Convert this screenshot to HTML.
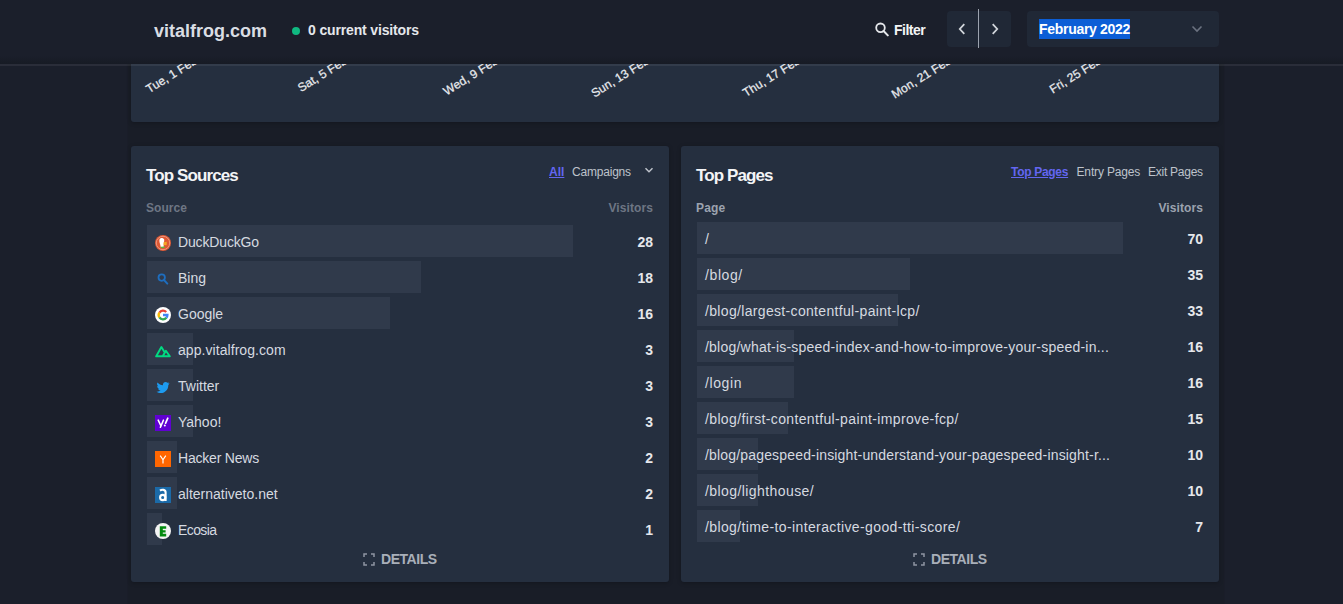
<!DOCTYPE html>
<html>
<head>
<meta charset="utf-8">
<style>
*{box-sizing:border-box;margin:0;padding:0}
html,body{width:1343px;height:604px;overflow:hidden;background:#1b1f2b;font-family:"Liberation Sans",sans-serif;color:#e5e7eb}
.abs{position:absolute}
.card{position:absolute;background:#252f3f;border-radius:3px;box-shadow:0 1px 4px rgba(0,0,0,.25)}
#cont{position:absolute;left:128px;top:64px;width:1096px;height:560px;background:#191d27;box-shadow:0 0 1px #191d27}
#header{position:absolute;left:0;top:0;width:1343px;height:64px;background:linear-gradient(to bottom,#1b1f2b 0,#1b1f2b 56px,#171b25 63px,#171b25 64px);z-index:10}
#hline{position:absolute;left:0;top:64px;width:1343px;height:2px;background:rgba(255,255,255,.065);z-index:11}
.t{position:absolute;white-space:nowrap;line-height:1}
.bar{position:absolute;left:16px;height:32px;background:#303a4b}
.row{position:absolute;left:0;width:100%;height:32px}
.lbl{position:absolute;left:47px;top:9px;font-size:14px;color:#d6dae0;white-space:nowrap;line-height:16px}
.plbl{position:absolute;left:24px;top:9px;font-size:14px;color:#d6dae0;white-space:nowrap;line-height:16px}
.num{position:absolute;right:16px;top:9px;font-size:14px;font-weight:bold;color:#e5e7eb;line-height:16px}
.ico{position:absolute;left:24px;top:10px;width:16px;height:16px}
.tk{position:absolute;width:0;height:0;transform:rotate(-32deg)}
.tk span{position:absolute;right:0;bottom:-1.84px;font-size:12px;line-height:12px;color:#e8eaee;white-space:nowrap;-webkit-text-stroke:0.25px #e8eaee}
</style>
</head>
<body>
<div id="cont"></div>
<!-- chart card (mostly hidden) -->
<div class="card" style="left:131px;top:-40px;width:1088px;height:162px"></div>
<div class="tk" style="left:197.6px;top:62.9px"><span>Tue, 1 Feb</span></div>
<div class="tk" style="left:348.4px;top:62.9px"><span>Sat, 5 Feb</span></div>
<div class="tk" style="left:499.2px;top:62.9px"><span>Wed, 9 Feb</span></div>
<div class="tk" style="left:650.0px;top:62.9px"><span>Sun, 13 Feb</span></div>
<div class="tk" style="left:800.8px;top:62.9px"><span>Thu, 17 Feb</span></div>
<div class="tk" style="left:951.6px;top:62.9px"><span>Mon, 21 Feb</span></div>
<div class="tk" style="left:1102.4px;top:62.9px"><span>Fri, 25 Feb</span></div>

<div id="hline"></div>
<div id="header">
  <div class="t" style="left:154px;top:21.5px;font-size:18px;font-weight:bold;color:#dadde3">vitalfrog.com</div>
  <div class="abs" style="left:292px;top:27px;width:8px;height:8px;border-radius:50%;background:#10b981"></div>
  <div class="t" style="left:308px;top:23px;font-size:14px;font-weight:bold;color:#e5e7eb;letter-spacing:-0.15px">0 current visitors</div>

  <svg class="abs" style="left:875px;top:22px" width="14" height="15" viewBox="0 0 14 15"><circle cx="5.5" cy="5.8" r="4.3" fill="none" stroke="#e5e7eb" stroke-width="1.8"/><path d="M8.6 9 L12.8 13.4" stroke="#e5e7eb" stroke-width="2" stroke-linecap="round"/></svg>
  <div class="t" style="left:894px;top:23px;font-size:14px;font-weight:bold;color:#f3f4f6;letter-spacing:-0.5px">Filter</div>

  <div class="abs" style="left:947px;top:11px;width:64px;height:36px;background:#202836;border-radius:4px"></div>
  <div class="abs" style="left:978px;top:9px;width:1px;height:39px;background:#9ca3af"></div>
  <svg class="abs" style="left:957px;top:22px" width="10" height="14" viewBox="0 0 10 14"><path d="M7.3 2.2 L2.8 7 L7.3 11.8" fill="none" stroke="#d1d5db" stroke-width="1.8"/></svg>
  <svg class="abs" style="left:990px;top:22px" width="10" height="14" viewBox="0 0 10 14"><path d="M2.7 2.2 L7.2 7 L2.7 11.8" fill="none" stroke="#d1d5db" stroke-width="1.8"/></svg>

  <div class="abs" style="left:1027px;top:11px;width:192px;height:36px;background:#202836;border-radius:4px"></div>
  <div class="abs" style="left:1039px;top:19px;width:91px;height:20px;background:#0c5ed6"></div>
  <div class="t" style="left:1039px;top:22px;font-size:14px;font-weight:bold;color:#ffffff;letter-spacing:-0.3px">February 2022</div>
  <svg class="abs" style="left:1191px;top:25px" width="12" height="9" viewBox="0 0 12 9"><path d="M1.5 1.5 L6 6 L10.5 1.5" fill="none" stroke="#6b7280" stroke-width="1.6"/></svg>
</div>

<!-- Top Sources -->
<div class="card" style="left:131px;top:146px;width:538px;height:436px">
  <div class="t" style="left:15px;top:21px;font-size:17px;font-weight:bold;color:#f3f4f6;letter-spacing:-0.9px">Top Sources</div>
  <div class="t" style="left:418px;top:19.5px;font-size:12px;font-weight:bold;color:#6366f1;text-decoration:underline">All</div>
  <div class="t" style="left:441px;top:19.5px;font-size:12px;color:#bec3cb;letter-spacing:-0.2px">Campaigns</div>
  <svg class="abs" style="left:513px;top:21px" width="10" height="7" viewBox="0 0 10 7"><path d="M1.5 1.2 L5 4.7 L8.5 1.2" fill="none" stroke="#bec3cb" stroke-width="1.5"/></svg>
  <div class="t" style="left:15px;top:56px;font-size:12px;font-weight:bold;color:#6e7684;letter-spacing:0.05px">Source</div>
  <div class="t" style="right:16px;top:56px;font-size:12px;font-weight:bold;color:#6e7684;letter-spacing:0.1px">Visitors</div>

  <div class="row" style="top:79px"><div class="bar" style="width:426px"></div>
    <svg class="ico" viewBox="0 0 16 16"><circle cx="8" cy="8" r="8" fill="#de5833"/><circle cx="8" cy="8" r="6.7" fill="none" stroke="#f0a590" stroke-width="0.8"/><path d="M4.4 5 C4.6 3.4 6.4 2.8 7.8 3.2 C9.2 3.6 9.4 4.8 9.2 6 L8.8 8 L8.6 12 L5.8 12.3 C5.6 10.4 4.9 8.8 4.6 7.4 C4.4 6.6 4.3 5.8 4.4 5Z" fill="#fff"/><path d="M8.6 7.2 L11.8 6.8 L11.6 10.2 L8.6 10Z" fill="#f5a623"/><path d="M5.8 11.8 L9.8 11.4 L9.6 13 L6 13.2Z" fill="#5bb645"/></svg>
    <div class="lbl" style="letter-spacing:-0.15px">DuckDuckGo</div><div class="num">28</div></div>
  <div class="row" style="top:115px"><div class="bar" style="width:274px"></div>
    <svg class="ico" viewBox="0 0 16 16"><circle cx="6.7" cy="6.6" r="3.2" fill="none" stroke="#1e6ebf" stroke-width="1.8"/><path d="M9.1 9.1 L12.3 12.6" stroke="#1e6ebf" stroke-width="2" stroke-linecap="round"/></svg>
    <div class="lbl">Bing</div><div class="num">18</div></div>
  <div class="row" style="top:151px"><div class="bar" style="width:243px"></div>
    <svg class="ico" viewBox="0 0 16 16"><circle cx="8" cy="8" r="8" fill="#fff"/><path d="M11.2 5.0 A4.4 4.4 0 0 0 4.4 5.6" fill="none" stroke="#ea4335" stroke-width="2.3"/><path d="M4.4 5.6 A4.4 4.4 0 0 0 4.4 10.4" fill="none" stroke="#fbbc05" stroke-width="2.3"/><path d="M4.4 10.4 A4.4 4.4 0 0 0 11.4 10.8" fill="none" stroke="#34a853" stroke-width="2.3"/><path d="M11.4 10.8 A4.4 4.4 0 0 0 12.4 8 H8" fill="none" stroke="#4285f4" stroke-width="2.3"/></svg>
    <div class="lbl">Google</div><div class="num">16</div></div>
  <div class="row" style="top:187px"><div class="bar" style="width:46px"></div>
    <svg class="ico" viewBox="0 0 16 16"><path d="M1.2 13.3 L6.4 4 L9.6 9.2 M7.7 13.3 L10.9 7.8 L14.8 13.3 Z M1.2 13.3 H7.7" fill="none" stroke="#00dc82" stroke-width="1.9" stroke-linejoin="round" stroke-linecap="round"/></svg>
    <div class="lbl" style="letter-spacing:0.06px">app.vitalfrog.com</div><div class="num">3</div></div>
  <div class="row" style="top:223px"><div class="bar" style="width:46px"></div>
    <svg class="ico" viewBox="0 0 16 16"><path d="M14.5 4.2 C14 4.4 13.5 4.6 13 4.6 C13.5 4.3 13.9 3.8 14.1 3.2 C13.6 3.5 13.1 3.7 12.5 3.8 C12 3.3 11.3 3 10.6 3 C9.1 3 7.9 4.2 7.9 5.7 C7.9 5.9 7.9 6.1 8 6.3 C5.8 6.2 3.8 5.1 2.5 3.5 C2.2 3.9 2.1 4.4 2.1 4.9 C2.1 5.9 2.6 6.7 3.3 7.2 C2.9 7.2 2.5 7.1 2.1 6.9 C2.1 8.2 3 9.3 4.3 9.6 C4 9.7 3.6 9.7 3.1 9.7 C3.5 10.8 4.5 11.5 5.6 11.6 C4.6 12.3 3.4 12.8 2.1 12.8 C1.9 12.8 1.7 12.8 1.5 12.7 C2.7 13.5 4.1 14 5.7 14 C10.6 14 13.3 9.9 13.3 6.4 V6 C13.8 5.6 14.2 5 14.5 4.2Z" fill="#1d9bf0"/></svg>
    <div class="lbl">Twitter</div><div class="num">3</div></div>
  <div class="row" style="top:259px"><div class="bar" style="width:46px"></div>
    <svg class="ico" viewBox="0 0 16 16"><rect x="0" y="0" width="16" height="16" fill="#6001d2"/><path d="M3.2 5.2 L6 11 M8.4 5.2 L5.4 12.2" stroke="#fff" stroke-width="1.6" stroke-linecap="round"/><path d="M12.8 3.2 L10.6 8.2" stroke="#fff" stroke-width="1.7" stroke-linecap="round"/><circle cx="9.8" cy="10.4" r="1" fill="#fff"/></svg>
    <div class="lbl">Yahoo!</div><div class="num">3</div></div>
  <div class="row" style="top:295px"><div class="bar" style="width:30px"></div>
    <svg class="ico" viewBox="0 0 16 16"><rect x="0" y="0" width="16" height="16" fill="#ff6600"/><path d="M5.2 4.6 L8 8.8 L10.8 4.6 M8 8.8 V12.4" fill="none" stroke="#fff" stroke-width="1.15"/></svg>
    <div class="lbl" style="letter-spacing:-0.2px">Hacker News</div><div class="num">2</div></div>
  <div class="row" style="top:331px"><div class="bar" style="width:30px"></div>
    <svg class="ico" viewBox="0 0 16 16"><rect x="0" y="0" width="16" height="16" fill="#1b6aa8"/><path d="M5 3.6 C6.8 2.2 10.6 2.4 10.6 5.4 V14" fill="none" stroke="#fff" stroke-width="2.1"/><ellipse cx="7.7" cy="10.5" rx="2.6" ry="2.6" fill="none" stroke="#fff" stroke-width="2.1"/></svg>
    <div class="lbl">alternativeto.net</div><div class="num">2</div></div>
  <div class="row" style="top:367px"><div class="bar" style="width:15px"></div>
    <svg class="ico" viewBox="0 0 16 16"><circle cx="8" cy="8" r="8" fill="#f4f4f4"/><path d="M4.8 3.2 H11.2 V5.8 H7.8 V7.2 H10.6 V9.4 H7.8 V10.8 H11.2 V13.6 H4.8Z" fill="#038a0f"/></svg>
    <div class="lbl" style="letter-spacing:-0.6px">Ecosia</div><div class="num">1</div></div>

  <div class="abs" style="left:232px;top:405.8px;width:12px;height:12px;">
    <svg width="12" height="13" viewBox="0 0 12 13"><path d="M1 4 V1 H4 M8 1 H11 V4 M11 9 V12 H8 M4 12 H1 V9" fill="none" stroke="#8e95a2" stroke-width="1.5"/></svg>
  </div>
  <div class="t" style="left:250px;top:405.8px;font-size:14px;font-weight:bold;color:#a9afb9;letter-spacing:-0.45px">DETAILS</div>
</div>

<!-- Top Pages -->
<div class="card" style="left:681px;top:146px;width:538px;height:436px">
  <div class="t" style="left:15px;top:21px;font-size:17px;font-weight:bold;color:#f3f4f6;letter-spacing:-0.9px">Top Pages</div>
  <div class="t" style="left:330px;top:19.5px;font-size:12px;font-weight:bold;color:#6366f1;text-decoration:underline;letter-spacing:-0.3px">Top Pages</div>
  <div class="t" style="left:395.5px;top:19.5px;font-size:12px;color:#bec3cb;letter-spacing:-0.15px">Entry Pages</div>
  <div class="t" style="left:467px;top:19.5px;font-size:12px;color:#bec3cb;letter-spacing:-0.25px">Exit Pages</div>
  <div class="t" style="left:15px;top:56px;font-size:12px;font-weight:bold;color:#9ca3af;letter-spacing:0.2px">Page</div>
  <div class="t" style="right:16px;top:56px;font-size:12px;font-weight:bold;color:#9ca3af;letter-spacing:0.1px">Visitors</div>

  <div class="row" style="top:76px"><div class="bar" style="width:426px"></div><div class="plbl">/</div><div class="num">70</div></div>
  <div class="row" style="top:112px"><div class="bar" style="width:213px"></div><div class="plbl" style="letter-spacing:0.6px">/blog/</div><div class="num">35</div></div>
  <div class="row" style="top:148px"><div class="bar" style="width:201px"></div><div class="plbl" style="letter-spacing:0.33px">/blog/largest-contentful-paint-lcp/</div><div class="num">33</div></div>
  <div class="row" style="top:184px"><div class="bar" style="width:97px"></div><div class="plbl" style="letter-spacing:0.22px">/blog/what-is-speed-index-and-how-to-improve-your-speed-in...</div><div class="num">16</div></div>
  <div class="row" style="top:220px"><div class="bar" style="width:97px"></div><div class="plbl" style="letter-spacing:0.6px">/login</div><div class="num">16</div></div>
  <div class="row" style="top:256px"><div class="bar" style="width:91px"></div><div class="plbl" style="letter-spacing:0.36px">/blog/first-contentful-paint-improve-fcp/</div><div class="num">15</div></div>
  <div class="row" style="top:292px"><div class="bar" style="width:61px"></div><div class="plbl" style="letter-spacing:0.17px">/blog/pagespeed-insight-understand-your-pagespeed-insight-r...</div><div class="num">10</div></div>
  <div class="row" style="top:328px"><div class="bar" style="width:61px"></div><div class="plbl" style="letter-spacing:0.42px">/blog/lighthouse/</div><div class="num">10</div></div>
  <div class="row" style="top:364px"><div class="bar" style="width:43px"></div><div class="plbl" style="letter-spacing:0.38px">/blog/time-to-interactive-good-tti-score/</div><div class="num">7</div></div>

  <div class="abs" style="left:232px;top:405.8px;width:12px;height:12px;">
    <svg width="12" height="13" viewBox="0 0 12 13"><path d="M1 4 V1 H4 M8 1 H11 V4 M11 9 V12 H8 M4 12 H1 V9" fill="none" stroke="#8e95a2" stroke-width="1.5"/></svg>
  </div>
  <div class="t" style="left:250px;top:405.8px;font-size:14px;font-weight:bold;color:#a9afb9;letter-spacing:-0.45px">DETAILS</div>
</div>
</body>
</html>
